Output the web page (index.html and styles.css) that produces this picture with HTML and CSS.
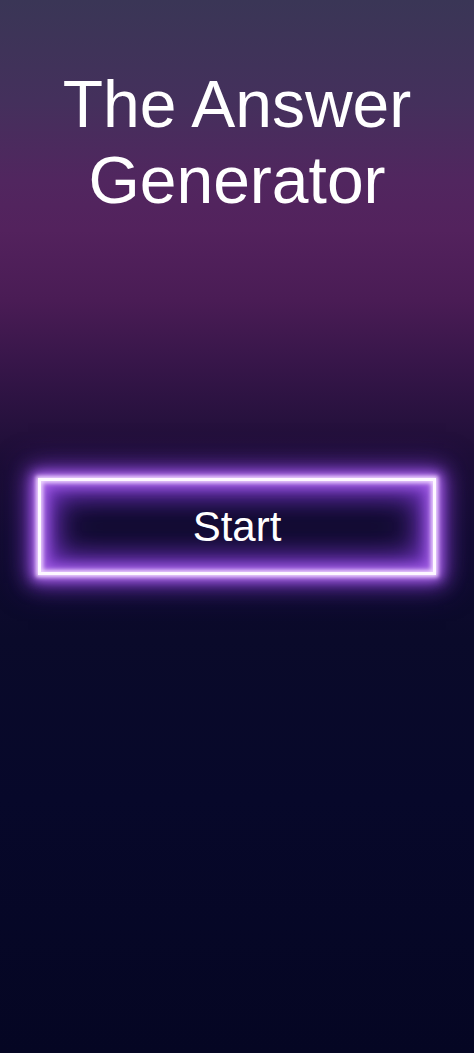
FILE: index.html
```html
<!DOCTYPE html>
<html lang="en">
<head>
<meta charset="utf-8">
<title>The Answer Generator</title>
<link rel="stylesheet" href="styles.css">
</head>
<body>
<main class="screen">
  <h1 class="title">The Answer Generator</h1>
  <button class="start" type="button">Start</button>
</main>
</body>
</html>
```
FILE: styles.css
```css
html, body {
  margin: 0;
  padding: 0;
}
body {
  width: 474px;
  height: 1053px;
  overflow: hidden;
  font-family: "Liberation Sans", Arial, sans-serif;
  background: linear-gradient(180deg,
    #3a3656 0px,
    #44305c 100px,
    #51265f 180px,
    #53225d 230px,
    #4a1c55 300px,
    #38164a 360px,
    #27113e 420px,
    #1a0d35 470px,
    #110b30 540px,
    #0a0a2a 640px,
    #07082a 800px,
    #050623 1053px);
}
.screen {
  display: flex;
  flex-direction: column;
  align-items: center;
  padding: 0 38px;
  height: 100%;
  box-sizing: border-box;
}
.title {
  margin: 66px 0 0;
  font-weight: 400;
  font-size: 66px;
  line-height: 76px;
  color: #ffffff;
  text-align: center;
  width: 360px;
}
.start {
  margin-top: 260px;
  width: 398px;
  height: 97px;
  box-sizing: border-box;
  border: 3px solid #fdf8ff;
  background: #0e0a2b;
  color: #ffffff;
  font-family: "Liberation Sans", Arial, sans-serif;
  font-size: 42px;
  padding: 0;
  box-shadow:
    0 0 4px 2px #f0d8ff,
    0 0 10px 4px #b06cec,
    0 0 18px 8px rgba(140, 70, 215, 0.9),
    0 0 30px 10px rgba(115, 50, 195, 0.5),
    inset 0 0 4px 2px #f0d8ff,
    inset 0 0 12px 6px #a460e6,
    inset 0 0 24px 12px rgba(130, 62, 210, 0.9),
    inset 0 0 38px 16px rgba(95, 40, 175, 0.6);
}
```
